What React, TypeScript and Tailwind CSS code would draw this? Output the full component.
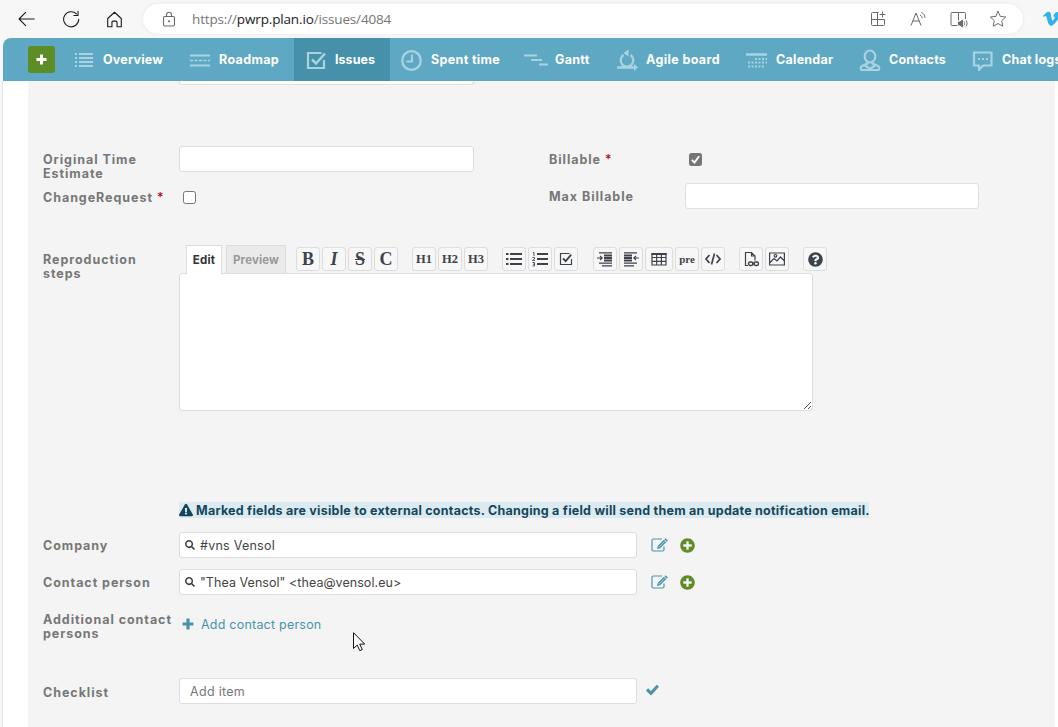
import type { ReactNode } from 'react';
import { FaExclamationTriangle, FaPlusCircle, FaQuestionCircle, FaSearch } from 'react-icons/fa';

function Line({ children, size = 18, className = '' }: { children: ReactNode; size?: number; className?: string }) {
  return (
    <svg width={size} height={size} viewBox="0 0 20 20" fill="none" stroke="currentColor" strokeWidth={1.1} strokeLinecap="round" strokeLinejoin="round" className={`shrink-0 ${className}`}>
      {children}
    </svg>
  );
}

function Plus({ size }: { size: number }) {
  return (
    <svg width={size} height={size} viewBox="0 0 12 12" fill="none" stroke="currentColor" strokeWidth="3.200">
      <path d="M6 .5v11M.5 6h11" />
    </svg>
  );
}

function Check({ size, className = '' }: { size: number; className?: string }) {
  return (
    <svg width={size} height={size} viewBox="0 0 12 12" fill="none" stroke="currentColor" strokeWidth="2.900" className={className}>
      <path d="M1 6l3.600 3.500L11 2.500" />
    </svg>
  );
}

/* Browser toolbar */
function BrowserBar() {
  return (
    <div className="flex h-[38px] w-[1058px] items-center bg-[#f7f7f7] text-[#1b1b1b]">
      <Line className="ml-[18px]" size={18}>
        <path d="M18 10H1.500M8.500 2.700L1.200 10l7.300 7.300" strokeWidth={1.2} />
      </Line>
      <Line className="ml-[26px]" size={18}>
        <path d="M18.600 10.300a8.400 8.400 0 1 1-2.500-6M17.800 1.500v4.600h-4.600" strokeWidth={1.2} />
      </Line>
      <Line className="ml-[26px]" size={17}>
        <path d="M2 8.800L10 1.500l8 7.300V18.600h-5v-5.200a1.500 1.500 0 0 0-1.500-1.500h-3A1.500 1.500 0 0 0 7 13.400v5.200H2z" strokeWidth={1.3} />
      </Line>
      <div className="ml-[20px] flex h-[30px] w-[880px] shrink-0 items-center rounded-full bg-white text-[#6b6b6b] shadow-[0_0_3px_#e2e2e2]">
        <svg width="14" height="17" viewBox="0 0 14 17" fill="none" stroke="currentColor" strokeWidth="1.100" className="ml-[19px]">
          <rect x="1.500" y="5.500" width="11" height="9.500" rx="1.500" />
          <path d="M4.500 5.500V3.700a2.500 2.500 0 0 1 5 0v1.800" />
          <circle cx="7" cy="10.300" r=".5" fill="currentColor" />
        </svg>
        <span className="ml-[16px] w-[220px] whitespace-nowrap font-['Open_Sans',sans-serif] text-[13.500px] tracking-[-0.150px] text-[#767676]">
          https://<span className="text-[#1b1b1b]">pwrp.plan.io</span>/issues/4084
        </span>
        <svg width="16" height="16" viewBox="0 0 16 16" fill="none" stroke="currentColor" strokeWidth="1" className="ml-[458px]">
          <path d="M8.500 1.500h-6a1 1 0 0 0-1 1v11a1 1 0 0 0 1 1h11a1 1 0 0 0 1-1v-5h-13M7.500 1.500v13M12.500 .5v6M9.500 3.500h6" />
        </svg>
        <svg width="17" height="16" viewBox="0 0 17 16" fill="none" stroke="currentColor" strokeWidth="1" className="ml-[24px]">
          <path d="M1 14.500L6 2l5 12.500M2.800 10h6.400M10 4c1.500.8 2 1.700 2.100 3.200M11.300 1.300c2.300 1.200 3.500 3 3.700 5.600" />
        </svg>
        <svg width="18" height="17" viewBox="0 0 18 17" fill="none" stroke="currentColor" strokeWidth="1" className="ml-[23px]">
          <path d="M7.500 14.500H2a1 1 0 0 1-1-1v-11a1 1 0 0 1 1-1h6.500v8M8.500 1.500h6a1 1 0 0 1 1 1V8M14 10.500c.8 1 .8 3 0 4M16 9.500c1.400 1.700 1.400 4.300 0 6" />
          <path d="M8.500 11h1.500L12.500 9v7l-2.500-2H8.500z" fill="currentColor" />
        </svg>
        <Line className="ml-[21px]" size={18}>
          <path d="M10 1.500l2.600 5.600 6 .7-4.500 4.100 1.300 6.100L10 15l-5.400 3 1.300-6.100L1.400 7.800l6-.7z" />
        </Line>
      </div>
      <svg width="17" height="16" viewBox="0 0 17 16" className="ml-[20px] shrink-0" fill="#32b3ee">
        <path d="M0 4.800C2 3 3.800.9 5.200.8c1.800-.2 2.500 1.200 2.800 3 .6 3.600.9 6 1.600 6 .6 0 2-2.200 2.100-3.200.1-1-.6-1.300-1.700-.8C11 2.600 12.700.900 15 1c1.700.1 2 1.500 1.700 3-.7 4.500-6.400 10.800-8.700 10.800-2.600 0-3.400-4.600-4.400-8.500C3.100 4.600 2.500 4.400.900 6z" />
      </svg>
    </div>
  );
}

const NAV: { label: string; width: string; track: string; icon: ReactNode; active?: boolean }[] = [
  {
    label: 'Overview',
    width: 'w-[116px]',
    track: 'tracking-[0.220px]',
    icon: <path d="M2 5h2M6 5h14M2 9h2M6 9h14M2 13h2M6 13h14M2 17h2M6 17h14" strokeWidth="1.800" />,
  },
  {
    label: 'Roadmap',
    width: 'w-[116px]',
    track: 'tracking-[0.350px]',
    icon: (
      <>
        <path d="M1 6.500h20M1 16.500h20" strokeWidth="2.200" />
        <path d="M1 11.500h20" strokeWidth="1.500" strokeDasharray="3 1.500" />
      </>
    ),
  },
  {
    label: 'Issues',
    width: 'w-[96px]',
    track: 'tracking-[0.050px]',
    active: true,
    icon: (
      <>
        <path d="M16.500 4H3v15h16V11" strokeWidth="2.200" />
        <path d="M7 10.500l4 4 9-10" strokeWidth="2.500" />
      </>
    ),
  },
  {
    label: 'Spent time',
    width: 'w-[124px]',
    track: 'tracking-[0.350px]',
    icon: (
      <>
        <circle cx="10.500" cy="11.500" r="9.300" strokeWidth="2.300" />
        <path d="M11 5.500v7H5.500" strokeWidth="2" />
      </>
    ),
  },
  {
    label: 'Gantt',
    width: 'w-[91px]',
    track: 'tracking-[0.300px]',
    icon: <path d="M-1 6.500h13M6 11h11M14 15.500h9" strokeWidth="2.200" />,
  },
  {
    label: 'Agile board',
    width: 'w-[130px]',
    track: 'tracking-[0.380px]',
    icon: (
      <>
        <path d="M7.500 6a6.300 6.300 0 1 0 7 0M1 18.500h18M11.500 4.500h-2" strokeWidth="2.300" />
        <path d="M12.500 .5v7L7.500 4zM18 15l4 3.500-4 3.500z" fill="currentColor" stroke="none" />
      </>
    ),
  },
  {
    label: 'Calendar',
    width: 'w-[113px]',
    track: 'tracking-[0.250px]',
    icon: (
      <>
        <path d="M0 5.500h21" strokeWidth="2.600" />
        <path d="M9 10h12M2 13.500h19M2 17.500h16" strokeWidth="2" strokeDasharray="2 1.500" />
      </>
    ),
  },
  {
    label: 'Contacts',
    width: 'w-[113px]',
    track: 'tracking-[0.200px]',
    icon: (
      <>
        <ellipse cx="11" cy="7.500" rx="5.300" ry="6" strokeWidth="2.200" />
        <path d="M8.500 13v1.500L3 17c-2 1-1.500 4 0 4h16c1.500 0 2-3 0-4l-5.500-2.500V13M6 16.500l5 3.500 5-3.500" strokeWidth="2.200" />
      </>
    ),
  },
  {
    label: 'Chat logs',
    width: 'w-[113px]',
    track: 'tracking-[0.200px]',
    icon: (
      <>
        <path d="M2 3.500h17.500v13H11L7 21v-4.500H2z" strokeWidth="2.200" strokeLinejoin="round" />
        <path d="M6 10h10" strokeWidth="2" strokeDasharray="2 2" />
      </>
    ),
  },
];

function Nav() {
  return (
    <nav className="flex h-[43px] overflow-hidden rounded-tl-lg bg-[#5fa8c3]">
      <div className="mt-2 mr-[7px] ml-[25px] flex size-[27px] shrink-0 items-center justify-center rounded-[3px] bg-[#5e8c26] text-white">
        <Plus size={11} />
      </div>
      {NAV.map((item) => (
        <div key={item.label} className={`flex shrink-0 items-center ${item.width} ${item.active ? 'bg-[#4790a9]' : ''}`}>
          <svg width="22" height="22" viewBox="0 0 22 22" fill="none" stroke="currentColor" overflow="visible" className="ml-[11px] text-[#aad3e1]">
            {item.icon}
          </svg>
          <span className={`mt-px ml-2 text-[12.500px] font-bold whitespace-nowrap text-white ${item.track}`}>{item.label}</span>
        </div>
      ))}
    </nav>
  );
}

function Label({ children, className = '' }: { children: ReactNode; className?: string }) {
  return <div className={`w-[136px] shrink-0 text-[12.500px] leading-[14px] font-bold tracking-[0.950px] text-[#777] ${className}`}>{children}</div>;
}

const BOX = 'h-[26px] rounded-[3px] border border-[#ddd] bg-white';

function Tool({ children, className = 'w-6' }: { children: ReactNode; className?: string }) {
  return (
    <div className={`flex h-6 shrink-0 items-center justify-center rounded-[3px] border border-[#ddd] bg-[#f7f7f7] font-['Liberation_Serif',serif] font-bold text-[#3e434b] ${className}`}>
      {children}
    </div>
  );
}

function ToolIcon({ children }: { children: ReactNode }) {
  return (
    <svg width="16" height="16" viewBox="0 0 16 16" fill="none" stroke="currentColor" strokeWidth="1.200" className="shrink-0">
      {children}
    </svg>
  );
}

function Editor() {
  return (
    <div className="w-[650px]">
      <div className="flex h-7 items-start pl-[7px]">
        <div className="relative h-[29px] w-9 border border-b-0 border-[#ddd] bg-white text-center text-[11.500px] leading-[28px] font-bold tracking-[0.250px] text-[#333]">Edit</div>
        <div className="ml-1 h-7 w-[60px] border border-b-0 border-[#ddd] bg-[#eaeaea] text-center text-[11.500px] leading-[28px] font-bold tracking-[0.150px] text-[#999]">Preview</div>
        <div className="mt-[2px] ml-[10px] flex gap-[2px]">
          <Tool><span className="text-[18px]">B</span></Tool>
          <Tool><span className="text-[18px] italic">I</span></Tool>
          <Tool><span className="text-[18px] line-through decoration-1">S</span></Tool>
          <Tool><span className="text-[18px]">C</span></Tool>
          <Tool className="ml-3 w-6"><span className="text-[12.500px]">H1</span></Tool>
          <Tool><span className="text-[12.500px]">H2</span></Tool>
          <Tool><span className="text-[12.500px]">H3</span></Tool>
          <Tool className="ml-3 w-6">
            <ToolIcon>
              <path d="M0 3h2.500M4 3h12M0 8h2.500M4 8h12M0 13h2.500M4 13h12" strokeWidth="2.200" />
            </ToolIcon>
          </Tool>
          <Tool>
            <ToolIcon>
              <path d="M5 3h11M5 8h11M5 13h11" strokeWidth="2.200" />
              <path d="M1 1.500h1V5M.5 6.500h2V8L.5 9.500h2.500M.5 11.500h2V15H.5M1 13.200h1.500" strokeWidth=".9" />
            </ToolIcon>
          </Tool>
          <Tool>
            <ToolIcon>
              <path d="M13.500 8v5.500h-11v-11h9" />
              <path d="M5 7.500l2.700 2.700 5.500-6.500" strokeWidth="1.800" />
            </ToolIcon>
          </Tool>
          <Tool className="ml-[13px] w-6">
            <ToolIcon>
              <path d="M2 1.800h13M2 12.200h13M5 14.800h10" strokeWidth="1.200" />
              <path d="M7 4.500h8M7 7h8M7 9.500h8" strokeWidth="2" />
              <path d="M0 7h5M3 5l2.200 2L3 9" strokeWidth="1.100" />
            </ToolIcon>
          </Tool>
          <Tool>
            <ToolIcon>
              <path d="M1 1.800h13M1 12.200h13M1 14.800h10" strokeWidth="1.200" />
              <path d="M1 4.500h8M1 7h8M1 9.500h8" strokeWidth="2" />
              <path d="M16 7h-5M13 5l-2.200 2L13 9" strokeWidth="1.100" />
            </ToolIcon>
          </Tool>
          <Tool className="w-7">
            <ToolIcon>
              <path d="M1 2.500h14v11.500H1zM1 6.500h14M1 10.300h14M5.700 3v11M10.400 3v11" />
              <path d="M.5 3h15" strokeWidth="2" />
            </ToolIcon>
          </Tool>
          <Tool><span className="text-[11px] leading-4">pre</span></Tool>
          <Tool>
            <ToolIcon>
              <path d="M4.500 4L1 8l3.500 4M11.500 4L15 8l-3.500 4M9.500 2.500l-3 11" strokeWidth="1.700" />
            </ToolIcon>
          </Tool>
          <Tool className="ml-3 w-6">
            <ToolIcon>
              <path d="M5 14.500H2.500V1.500h6L12 5v4.500M8.500 1.500V5H12" />
              <rect x="5.500" y="11" width="4.500" height="3.500" rx="1.700" strokeWidth="1.500" />
              <rect x="11" y="11" width="4.500" height="3.500" rx="1.700" strokeWidth="1.500" />
              <path d="M9 12.800h3" />
            </ToolIcon>
          </Tool>
          <Tool>
            <ToolIcon>
              <path d="M.6 2h14.800v12H.6zM1 11.500l4-4 3 2.500L11.500 6l4 4" />
              <circle cx="6.500" cy="4.800" r="1.300" />
            </ToolIcon>
          </Tool>
          <Tool className="ml-3 w-6"><FaQuestionCircle size={15} /></Tool>
        </div>
      </div>
      <div className="flex h-[138px] w-[634px] items-end justify-end rounded-[3px] border border-[#ddd] bg-white">
        <svg width="9" height="9" viewBox="0 0 9 9" stroke="#555" strokeWidth="1">
          <path d="M1 8L8 1M5 8l3-3" />
        </svg>
      </div>
    </div>
  );
}

function ContactField({ value, track }: { value: string; track: string }) {
  return (
    <>
      <div className={`${BOX} flex w-[458px] items-center pl-[5px] text-[#444]`}>
        <FaSearch size={10} />
        <span className={`mt-[2px] ml-[5px] text-[12.500px] whitespace-pre ${track}`}>{value}</span>
      </div>
      <svg width="18" height="16" viewBox="0 0 18 16" fill="none" stroke="#4a93ac" className="ml-[14px]">
        <path d="M11 2H2.500Q1 2 1 3.500v9Q1 14 2.500 14h9q1.500 0 1.500-1.500V9.500" strokeWidth="1.200" />
        <path d="M8 10L14 4M14.500 3.500l1.200-1.200" strokeWidth="3.200" />
        <path d="M8.300 9.800L13.500 4.600" stroke="#cfe2e9" strokeWidth=".7" />
        <path d="M6 12l.8-3.200 2.400 2.400z" fill="#4a93ac" stroke="none" />
      </svg>
      <FaPlusCircle size={15} className="ml-[11px] text-[#5e8c26]" />
    </>
  );
}

export default function App() {
  return (
    <div className="relative h-[727px] w-[1058px] overflow-hidden bg-[#f7f7f7] font-[Inter,sans-serif]">
      <BrowserBar />
      <div className="ml-[3px]">
        <Nav />
        <main className="-ml-px h-[646px] border-l border-[#e4e4e4] bg-white pr-[3px] pl-6">
          <div className="ml-px h-full bg-[#f4f4f4] pl-[15px]">
            <div className="ml-[136px] h-1 w-[295px] rounded-b-[3px] border border-t-0 border-[#ddd] bg-white" />

            <div className="flex h-[160px] pt-[61px]">
              <div className="w-[506px]">
                <div className="flex h-[37px]">
                  <Label className="pt-[7px]">Original Time<br />Estimate</Label>
                  <div className={`${BOX} w-[295px]`} />
                </div>
                <div className="flex">
                  <Label className="pt-[8px] whitespace-nowrap">ChangeRequest<span className="pl-1 font-medium text-[#b00020]">*</span></Label>
                  <div className="mt-2 ml-1 size-[13px] rounded-[2.500px] border border-[#767676] bg-white" />
                </div>
              </div>
              <div>
                <div className="flex h-[37px]">
                  <Label className="pt-[7px]">Billable<span className="pl-1 font-medium text-[#b00020]">*</span></Label>
                  <div className="mt-[7px] ml-1 flex size-[13px] items-center justify-center rounded-[2.500px] bg-[#767676] text-white">
                    <svg width="11" height="11" viewBox="0 0 12 12" fill="none" stroke="currentColor" strokeWidth="2">
                      <path d="M2 6.500L4.800 9.300L10 2.500" />
                    </svg>
                  </div>
                </div>
                <div className="flex">
                  <Label className="pt-[7px]">Max Billable</Label>
                  <div className={`${BOX} w-[294px]`} />
                </div>
              </div>
            </div>

            <div className="flex h-[257px]">
              <Label className="pt-[8px]">Reproduction<br />steps</Label>
              <Editor />
            </div>

            <div className="ml-[136px] flex h-4 w-[690px] items-center bg-[#dcebf1] text-[#16465a]">
              <FaExclamationTriangle size={14} className="shrink-0" />
              <span className="mt-[2px] ml-[3px] text-[12.500px] font-bold tracking-[0.240px] whitespace-nowrap">
                Marked fields are visible to external contacts. Changing a field will send them an update notification email.
              </span>
            </div>

            <div className="mt-[14px] flex h-[26px] items-center">
              <Label className="pt-px">Company</Label>
              <ContactField value="#vns Vensol" track="tracking-[0.250px]" />
            </div>
            <div className="mt-[11px] flex h-[26px] items-center">
              <Label className="pt-px">Contact person</Label>
              <ContactField value={'"Thea Vensol" <thea@vensol.eu>'} track="tracking-[0.050px]" />
            </div>

            <div className="mt-[17px] flex h-[66px]">
              <Label className="pt-px whitespace-nowrap">Additional contact<br />persons</Label>
              <div className="ml-[3px] flex h-6 items-center text-[#4a93ac]">
                <Plus size={12} />
                <span className="mt-[2px] ml-[7px] text-[12.500px] tracking-[0.220px]">Add contact person</span>
              </div>
            </div>

            <div className="flex h-[26px] items-center">
              <Label className="pt-[3px]">Checklist</Label>
              <div className={`${BOX} w-[458px] pl-[10px] text-[12.500px] leading-[26px] tracking-[0.300px] text-[#777]`}>Add item</div>
              <Check size={13} className="mb-[4px] ml-[9px] text-[#4a93ac]" />
            </div>
          </div>
        </main>
      </div>

      {/* Mouse pointer */}
      <svg width="13" height="20" viewBox="0 0 13 20" className="absolute top-[632px] left-[353px]" fill="white" stroke="#111" strokeWidth="1">
        <path d="M.5.700v15.800l3.700-3.400 2.600 5.600 2.500-1.200-2.600-5.400h5z" />
      </svg>
    </div>
  );
}
